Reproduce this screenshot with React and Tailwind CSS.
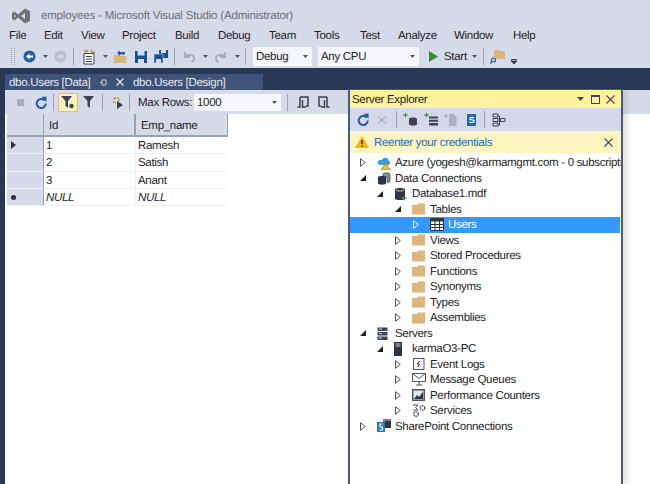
import React from 'react';

const font = '"Liberation Sans", Arial, sans-serif';

const menus = [
  ['File', 'w-[35px]'],
  ['Edit', 'w-[37px]'],
  ['View', 'w-[41px]'],
  ['Project', 'w-[53px]'],
  ['Build', 'w-[43px]'],
  ['Debug', 'w-[51px]'],
  ['Team', 'w-[45px]'],
  ['Tools', 'w-[46px]'],
  ['Test', 'w-[38px]'],
  ['Analyze', 'w-[56px]'],
  ['Window', 'w-[59px]'],
  ['Help', 'w-[40px]'],
];

function Svg({ w = 16, h = 16, className = '', children }) {
  return (
    <svg width={w} height={h} viewBox={`0 0 ${w} ${h}`} className={`shrink-0 ${className}`}>
      {children}
    </svg>
  );
}

const VsLogo = () => (
  <Svg w={20} h={16}>
    <path d="M14 0.5 L19 3 V13 L14 15.5 L7 9.5 L3.5 12.5 L1 11 V5 L3.5 3.5 L7 6.5 Z M14 5 L10 8 L14 11 Z M3.5 6.5 V9.5 L5 8 Z" fill="#6f7276" fillRule="evenodd" />
  </Svg>
);

const Caret = ({ className = '' }) => (
  <Svg w={5} h={3} className={className}>
    <path d="M0 0 H5 L2.5 3 Z" fill="#4b5563" />
  </Svg>
);

const Sep = ({ className = '' }) => <div className={`w-px h-[17px] bg-[#9aa1b2] shrink-0 ${className}`} />;

const BackIcon = ({ off }) => (
  <Svg w={13} h={13}>
    <circle cx="6.5" cy="6.5" r="6" fill={off ? '#b9bdc9' : '#1f5fa3'} />
    <path d="M3 6.5 L6.5 3.5 V5.5 H10 V7.5 H6.5 V9.5 Z" fill={off ? '#d6dbe9' : '#ffffff'} transform={off ? 'matrix(-1 0 0 1 13 0)' : undefined} />
  </Svg>
);

const NewProject = () => (
  <Svg w={14} h={16}>
    <path d="M2 4.5 H12 V15 H2 Z" fill="#fff" stroke="#3c4250" />
    <path d="M4 7.5 H10 M4 10 H10 M4 12.5 H10" stroke="#3c4250" />
    <path d="M2 1 L4 3 L6 1 M9 1 L10 3 L13 3.5" stroke="#c98a2b" strokeWidth="1.5" fill="none" />
  </Svg>
);

const OpenFile = () => (
  <Svg w={14} h={14}>
    <path d="M1 5 H5 L6 6 H13 V13 H1 Z" fill="#dcb67a" />
    <path d="M4 3 L7 0.5 V2 H12 V4.5 H7 V6 Z" fill="#1f5fa3" />
  </Svg>
);

const SaveIcon = () => (
  <Svg w={12} h={12}>
    <path d="M0 0 H12 V12 H0 Z" fill="#1c4f8c" />
    <path d="M2.5 0 H9.5 V4.5 H2.5 Z M3 8 H9 V12 H3 Z" fill="#d6dbe9" />
  </Svg>
);

const SaveAll = () => (
  <Svg w={14} h={13}>
    <path d="M5 0 H14 V8 H5 Z" fill="#1c4f8c" />
    <path d="M7 0 H12 V3 H7 Z" fill="#d6dbe9" />
    <path d="M0 4 H9 V13 H0 Z" fill="#1c4f8c" stroke="#d6dbe9" strokeWidth="0.6" />
    <path d="M2 9 H7 V13 H2 Z" fill="#d6dbe9" />
  </Svg>
);

const UndoIcon = ({ flip }) => (
  <Svg w={12} h={12} className={flip ? '-scale-x-100' : ''}>
    <path d="M2 1 V6 H7 M2.5 5.5 C5 2.5 11 3.5 11 7.5 C11 9 10 10.5 8.5 11" fill="none" stroke="#a6abb8" strokeWidth="1.8" />
  </Svg>
);

const Play = () => (
  <Svg w={9} h={11}>
    <path d="M0 0 L9 5.5 L0 11 Z" fill="#388a34" />
  </Svg>
);

const FindFolder = () => (
  <Svg w={15} h={15}>
    <path d="M4 1 H9 L10 2 H15 V10 H4 Z" fill="#dcb67a" />
    <circle cx="3.5" cy="11" r="2" fill="#d6dbe9" stroke="#1f5fa3" strokeWidth="1.2" />
    <path d="M2 12.5 L0.5 14.5" stroke="#1f5fa3" strokeWidth="1.3" />
  </Svg>
);

const Refresh = () => (
  <Svg w={12} h={13}>
    <path d="M9.5 4.5 A4.5 4.5 0 1 0 10.7 7.5" fill="none" stroke="#1c5da0" strokeWidth="2" />
    <path d="M6.5 1 L11.5 0.5 L11.5 6 Z" fill="#1c5da0" />
  </Svg>
);

const Funnel = ({ gear }) => (
  <Svg w={14} h={13}>
    <path d="M0 0 H11 L7 5 V12 L4.5 10 V5 Z" fill="#3c4250" />
    {gear && <circle cx="10.5" cy="10" r="2.7" fill="#3c4250" stroke="#fdf0c0" />}
  </Svg>
);

const RunQuery = () => (
  <Svg w={11} h={14}>
    <path d="M1 2 H6 V5 M1 2 V7 H3" fill="none" stroke="#c98a2b" strokeWidth="1.3" strokeDasharray="2 1" />
    <path d="M4 5 L10 9 L4 13 Z" fill="#3c4250" />
  </Svg>
);

const PaneIcon = ({ flip }) => (
  <Svg w={13} h={13} className={flip ? '-scale-x-100' : ''}>
    <path d="M3 1 H11 V10 H9 M3 1 V11 H0.5 M5.5 11 H9 M5.5 4 V12" fill="none" stroke="#3c4250" strokeWidth="1.5" />
  </Svg>
);

const AddDb = () => (
  <Svg w={15} h={13}>
    <path d="M0 2 H5 M2.5 0 V4" stroke="#388a34" strokeWidth="1.2" />
    <path d="M6 6 C6 4 14 4 14 6 V11 C14 13 6 13 6 11 Z" fill="#3c4250" />
  </Svg>
);

const AddServer = () => (
  <Svg w={15} h={13}>
    <path d="M0 2 H5 M2.5 0 V4" stroke="#388a34" strokeWidth="1.2" />
    <path d="M5 3.5 H14 V5.5 H5 Z M5 6.8 H14 V8.8 H5 Z M5 10 H14 V12.5 H5 Z" fill="#3c4250" />
  </Svg>
);

const AddDoc = () => (
  <Svg w={13} h={14}>
    <path d="M0 3 H4 M2 1 V5" stroke="#aab0be" strokeWidth="1.2" />
    <path d="M5 1 H10 L12.5 4 V13 H5 Z" fill="#aab0be" />
  </Svg>
);

const SpBadge = () => (
  <div className="w-[9px] h-[12px] bg-[#1c6bb0] text-white text-[9px] font-bold leading-[12px] text-center shrink-0">S</div>
);

const Diagram = () => (
  <Svg w={14} h={14}>
    <path d="M1 1 H6 V4 H1 Z M1 5.5 H6 V8.5 H1 Z M1 10 H6 V13 H1 Z M8.5 5.5 H13 V8.5 H8.5 Z" fill="none" stroke="#3c4250" />
    <path d="M6 3 H7.5 V12 H6 M7.5 7 H8.5" fill="none" stroke="#3c4250" />
  </Svg>
);

const Folder = () => (
  <Svg w={13} h={12}>
    <path d="M0 2 H5 L6 0.5 H13 V11.5 H0 Z" fill="#dcb67a" />
  </Svg>
);

const TableIcon = () => (
  <Svg w={14} h={13}>
    <path d="M0.5 0.5 H13.5 V12.5 H0.5 Z" fill="#ffffff" stroke="#30343f" />
    <path d="M0.5 0.5 H13.5 V3.5 H0.5 Z" fill="#30343f" />
    <path d="M5 3 V12 M9.5 3 V12 M1 6.5 H13 M1 9.5 H13" stroke="#30343f" />
  </Svg>
);

const AzureIcon = () => (
  <Svg w={14} h={14}>
    <path d="M1 8 C0 5 3 3 5 4 C6 1 11 1 12 5 C14 6 13 9 11 9 H3 Z" fill="#3aa0dc" />
    <path d="M8.5 7 L13.5 14 H4 Z" fill="#f2c12e" stroke="#7a5a10" strokeWidth="0.5" />
  </Svg>
);

const DataConn = () => (
  <Svg w={14} h={13}>
    <path d="M6 2 C6 0.5 13 0.5 13 2 V9 C13 10 11 10.5 10 10.5 V5 H6 Z" fill="#8a8f9b" stroke="#30343f" strokeWidth="0.7" />
    <path d="M1 5 C1 3.5 9 3.5 9 5 V11.5 C9 13 1 13 1 11.5 Z" fill="#30343f" />
  </Svg>
);

const DbFile = () => (
  <Svg w={13} h={14}>
    <path d="M1 2.5 C1 0.5 11 0.5 11 2.5 V11.5 C11 13.5 1 13.5 1 11.5 Z" fill="#30343f" />
    <path d="M2 3 C4 4.5 8 4.5 10 3" stroke="#c9ccd4" fill="none" />
    <path d="M8 11 H13 M10.5 9 L8 11 L10.5 13" stroke="#388a34" strokeWidth="1.2" fill="none" />
  </Svg>
);

const ServersIcon = () => (
  <Svg w={11} h={13}>
    <path d="M0.5 0.5 H10.5 V4 H0.5 Z M0.5 5 H10.5 V8.5 H0.5 Z M0.5 9.5 H10.5 V13 H0.5 Z" fill="#3c4250" />
    <path d="M2 2 H5 M2 6.5 H5 M2 11 H5" stroke="#d0d3da" />
  </Svg>
);

const PcIcon = () => (
  <Svg w={8} h={14}>
    <path d="M0 0 H8 V14 H0 Z" fill="#30343f" />
    <path d="M1.5 2 H6.5 M1.5 4 H6.5" stroke="#c9ccd4" />
  </Svg>
);

const LogIcon = () => (
  <Svg w={13} h={12}>
    <path d="M1.5 0.5 H12 V11.5 H1.5 Z" fill="#f4f4f6" stroke="#50555f" />
    <path d="M8 3 L5 6 H7.5 L6 9" fill="none" stroke="#30343f" />
  </Svg>
);

const MailIcon = () => (
  <Svg w={14} h={13}>
    <path d="M0.5 0.5 H13.5 V8.5 H0.5 Z M0.5 0.5 L7 5.5 L13.5 0.5" fill="#fff" stroke="#50555f" />
    <path d="M7 9 V12 M4 12 H10" stroke="#50555f" />
  </Svg>
);

const PerfIcon = () => (
  <Svg w={13} h={12}>
    <path d="M0 0 H13 V12 H0 Z" fill="#50555f" />
    <path d="M1.5 1.5 H11.5 V10.5 H1.5 Z" fill="#e8e9ec" />
    <path d="M2 10 L5 6 L7 8 L11 3 V10 Z" fill="#30343f" />
  </Svg>
);

const ServicesIcon = () => (
  <Svg w={14} h={13}>
    <circle cx="10.5" cy="4" r="2.3" fill="none" stroke="#50555f" strokeWidth="1.4" strokeDasharray="1.5 0.8" />
    <circle cx="4" cy="10" r="2.3" fill="none" stroke="#50555f" strokeWidth="1.4" strokeDasharray="1.5 0.8" />
    <path d="M1 1 H6 L3.5 3.5 L6 6 H1" fill="none" stroke="#50555f" />
  </Svg>
);

const SpIcon = () => (
  <Svg w={14} h={14}>
    <path d="M6 0 H14 V9 H6 Z" fill="#7b808b" />
    <path d="M8 2 H14 V9 H8 Z" fill="#30343f" />
    <path d="M0 3 H8 V13 H0 Z" fill="#1c78c0" />
    <path d="M5.5 5 H3 V8 H5.5 V11 H2.5" fill="none" stroke="#fff" strokeWidth="1.2" />
  </Svg>
);

const XIcon = ({ size = 9, color = '#4a4f5c' }) => (
  <Svg w={size} h={size}>
    <path d={`M0.5 0.5 L${size - 0.5} ${size - 0.5} M${size - 0.5} 0.5 L0.5 ${size - 0.5}`} stroke={color} strokeWidth="1.2" />
  </Svg>
);

const Arrow = ({ open, white }) =>
  open ? (
    <Svg w={6} h={6}>
      <path d="M6 0 V6 H0 Z" fill="#1e1e1e" />
    </Svg>
  ) : (
    <Svg w={6} h={9}>
      <path d="M0.5 0.7 L5.3 4.5 L0.5 8.3 Z" fill="none" stroke={white ? '#ffffff' : '#50555f'} />
    </Svg>
  );

const tree = [
  { label: 'Azure (yogesh@karmamgmt.com - 0 subscriptions)', level: 0, icon: <AzureIcon /> },
  { label: 'Data Connections', level: 0, open: true, icon: <DataConn /> },
  { label: 'Database1.mdf', level: 1, open: true, icon: <DbFile /> },
  { label: 'Tables', level: 2, open: true, icon: <Folder /> },
  { label: 'Users', level: 3, selected: true, icon: <TableIcon /> },
  { label: 'Views', level: 2, icon: <Folder /> },
  { label: 'Stored Procedures', level: 2, icon: <Folder /> },
  { label: 'Functions', level: 2, icon: <Folder /> },
  { label: 'Synonyms', level: 2, icon: <Folder /> },
  { label: 'Types', level: 2, icon: <Folder /> },
  { label: 'Assemblies', level: 2, icon: <Folder /> },
  { label: 'Servers', level: 0, open: true, icon: <ServersIcon /> },
  { label: 'karmaO3-PC', level: 1, open: true, icon: <PcIcon /> },
  { label: 'Event Logs', level: 2, icon: <LogIcon /> },
  { label: 'Message Queues', level: 2, icon: <MailIcon /> },
  { label: 'Performance Counters', level: 2, icon: <PerfIcon /> },
  { label: 'Services', level: 2, icon: <ServicesIcon /> },
  { label: 'SharePoint Connections', level: 0, icon: <SpIcon /> },
];

const indents = ['pl-[10px]', 'pl-[27px]', 'pl-[45px]', 'pl-[63px]'];

function TreeRow({ row }) {
  return (
    <div className={`flex items-center h-[15.5px] whitespace-nowrap ${indents[row.level]} ${row.selected ? 'bg-[#3399ff] text-white' : 'text-[#1e1e1e]'}`}>
      <div className="w-[17px] flex items-center shrink-0">
        <Arrow open={row.open} white={row.selected} />
      </div>
      <div className="w-[18px] flex items-center justify-start shrink-0">{row.icon}</div>
      <span className="mt-[2px]">{row.label}</span>
    </div>
  );
}

const gridRows = [
  ['1', 'Ramesh', 'arrow'],
  ['2', 'Satish', ''],
  ['3', 'Anant', ''],
  ['NULL', 'NULL', 'star'],
];

function ServerExplorer() {
  return (
    <div className="absolute left-[348px] top-[89px] w-[275px] h-[395px] bg-white border-x-2 border-t border-[#4a5a78] flex flex-col shadow-[4px_0_6px_rgba(0,0,0,0.12)] overflow-hidden text-[11.5px]">
      <div className="h-[18px] bg-[#fff29d] flex items-center pl-[2px] pr-[6px] shrink-0 text-[#1e1e1e]">
        <span className="mt-[3px]">Server Explorer</span>
        <Svg w={7} h={4} className="ml-auto">
          <path d="M0 0 H7 L3.5 4 Z" fill="#3c4250" />
        </Svg>
        <Svg w={9} h={9} className="ml-[7px]">
          <path d="M0.5 1.5 H8.5 V8.5 H0.5 Z" fill="none" stroke="#3c4250" />
          <path d="M0 1 H9" stroke="#3c4250" strokeWidth="2" />
        </Svg>
        <div className="ml-[6px]">
          <XIcon />
        </div>
      </div>
      <div className="h-[23px] bg-[#d3d9e8] flex items-center pl-[7px] shrink-0">
        <Refresh />
        <div className="ml-[9px]">
          <XIcon size={8} color="#aab0be" />
        </div>
        <Sep className="ml-[10px]" />
        <div className="ml-[6px]"><AddDb /></div>
        <div className="ml-[6px]"><AddServer /></div>
        <div className="ml-[5px]"><AddDoc /></div>
        <div className="ml-[10px]"><SpBadge /></div>
        <Sep className="ml-[8px]" />
        <div className="ml-[7px]"><Diagram /></div>
      </div>
      <div className="h-[22px] bg-[#fdf4bf] flex items-center pl-[5px] pr-[8px] shrink-0">
        <Svg w={14} h={12}>
          <path d="M7 0 L14 12 H0 Z" fill="#f2b705" />
          <path d="M7 4 V8 M7 9.3 V10.8" stroke="#1e1e1e" strokeWidth="1.3" />
        </Svg>
        <span className="ml-[5px] mt-[3px] text-[#1c6bb8]">Reenter your credentials</span>
        <div className="ml-auto">
          <XIcon />
        </div>
      </div>
      <div className="pt-[2px] pr-[1px]">
        {tree.map((row) => (
          <TreeRow key={row.label} row={row} />
        ))}
      </div>
    </div>
  );
}

export default function App() {
  return (
    <div className="relative w-[650px] h-[484px] overflow-hidden bg-white text-[11.5px] tracking-[-0.3px] text-[#1e1e1e] [text-rendering:geometricPrecision]" style={{ fontFamily: font }}>
      <div className="bg-[#d6dbe9]">
        <div className="h-[27px] flex items-center pl-[11px] pt-[4px]">
          <VsLogo />
          <span className="ml-[10px] mt-[2px] tracking-[-0.18px] text-[#6d7078] whitespace-nowrap">employees - Microsoft Visual Studio (Administrator)</span>
        </div>
        <div className="h-[18px] flex items-center pl-[9px] pt-[2px]">
          {menus.map(([name, width]) => (
            <span key={name} className={width}>{name}</span>
          ))}
        </div>
        <div className="h-[23px] flex items-center pl-[11px]">
          <div className="w-[4px] h-[17px] shrink-0 border-x border-dotted border-[#9aa1b2]" />
          <div className="ml-[8px]"><BackIcon /></div>
          <Caret className="ml-[7px]" />
          <div className="ml-[6px]"><BackIcon off /></div>
          <Sep className="ml-[6px]" />
          <div className="ml-[8px]"><NewProject /></div>
          <Caret className="ml-[7px]" />
          <div className="ml-[5px]"><OpenFile /></div>
          <div className="ml-[8px]"><SaveIcon /></div>
          <div className="ml-[7px]"><SaveAll /></div>
          <Sep className="ml-[6px]" />
          <div className="ml-[8px]"><UndoIcon /></div>
          <Caret className="ml-[8px]" />
          <div className="ml-[7px]"><UndoIcon flip /></div>
          <Caret className="ml-[8px]" />
          <Sep className="ml-[5px]" />
          <div className="ml-[7px] w-[59px] h-[19px] bg-[#f5f6fa] flex items-center pl-[3px] shrink-0">
            <span className="mt-[2px]">Debug</span>
            <Caret className="ml-auto mr-[4px]" />
          </div>
          <div className="ml-[6px] w-[101px] h-[19px] bg-[#f5f6fa] flex items-center pl-[3px] shrink-0">
            <span className="mt-[2px]">Any CPU</span>
            <Caret className="ml-auto mr-[4px]" />
          </div>
          <div className="ml-[10px]"><Play /></div>
          <span className="ml-[6px] mt-[2px] w-[22px] whitespace-nowrap">Start</span>
          <Caret className="ml-[6px]" />
          <Sep className="ml-[6px]" />
          <div className="ml-[6px]"><FindFolder /></div>
          <Svg w={6} h={5} className="ml-[6px] mt-[10px]">
            <path d="M0 0.5 H6 M0 2 H6 L3 5 L0 2" stroke="#3c4250" fill="#3c4250" />
          </Svg>
        </div>
      </div>

      <div className="h-[22px] bg-[#293955] flex items-end pl-[5px]">
        <div className="h-[16px] w-[123px] bg-[#3e5377] text-[#e4e9f2] flex items-center pl-[4px]">
          <span className="mt-[3px] whitespace-nowrap">dbo.Users [Data]</span>
          <Svg w={7} h={7} className="ml-auto">
            <path d="M0 3.5 H2 M2 1 H6 V6 H2 Z" fill="none" stroke="#c9d0de" />
          </Svg>
          <div className="ml-[9px] mr-[4px]"><XIcon size={8} color="#dfe4ee" /></div>
        </div>
        <div className="h-[16px] w-[135px] bg-[#3e5377] text-[#e4e9f2] flex items-center pl-[5px]">
          <span className="mt-[3px] whitespace-nowrap">dbo.Users [Design]</span>
        </div>
      </div>

      <div className="flex h-[394px]">
        <div className="w-[5px] bg-[#293955] shrink-0" />
        <div className="flex-1 flex flex-col">
          <div className="h-[24px] bg-[#d6dbe9] flex items-center pl-[12px] pt-[1px]">
            <div className="w-[7px] h-[7px] bg-[#a6abb8] shrink-0" />
            <div className="ml-[11px]"><Refresh /></div>
            <Sep className="ml-[6px]" />
            <div className="ml-[4px] w-[20px] h-[19px] bg-[#fdf0c0] border border-[#e5c365] flex items-center justify-center shrink-0"><Funnel gear /></div>
            <div className="ml-[5px]"><Funnel /></div>
            <Sep className="ml-[5px]" />
            <div className="ml-[10px]"><RunQuery /></div>
            <Sep className="ml-[5px]" />
            <span className="ml-[8px] mt-[2px] w-[50px] shrink-0 whitespace-nowrap">Max Rows:</span>
            <div className="ml-[6px] w-[87px] h-[17px] bg-[#f5f6fa] flex items-center pl-[3px] shrink-0">
              <span className="mt-[2px]">1000</span>
              <Caret className="ml-auto mr-[4px]" />
            </div>
            <Sep className="ml-[6px]" />
            <div className="ml-[9px]"><PaneIcon /></div>
            <div className="ml-[7px]"><PaneIcon flip /></div>
          </div>
          <div className="pl-[2px] w-[223px]">
            <div className="grid grid-cols-[37px_92px_92px] grid-rows-[23px_17.3px_17.3px_17.3px_17.3px]">
              <div className="bg-[#d6dbe9] border-r border-b-2 border-[#9aa1b2]" />
              <div className="bg-[#d6dbe9] border-r-2 border-b-2 border-[#9aa1b2] flex items-center pl-[5px] pt-[4px]">Id</div>
              <div className="bg-[#d6dbe9] border-b-2 border-r border-[#9aa1b2] flex items-center pl-[5px] pt-[4px]">Emp_name</div>
              {gridRows.map(([id, name, mark]) => {
                const isNull = mark === 'star';
                return (
                  <React.Fragment key={id}>
                    <div className="bg-[#d6dbe9] border-r border-b border-[#9aa1b2] border-b-[#f0f2f7] flex items-center justify-center pr-[23px]">
                      {mark === 'arrow' && (
                        <Svg w={5} h={8}>
                          <path d="M0 0 L5 4 L0 8 Z" fill="#30343f" />
                        </Svg>
                      )}
                      {mark === 'star' && <div className="w-[5px] h-[5px] bg-[#30343f] rounded-full" />}
                    </div>
                    <div className={`border-r border-b border-[#eef0f5] flex items-center pl-[2px] pt-[3px] ${isNull ? 'italic' : ''}`}>{id}</div>
                    <div className={`border-b border-[#eef0f5] flex items-center pl-[2px] pt-[3px] ${isNull ? 'italic' : ''}`}>{name}</div>
                  </React.Fragment>
                );
              })}
            </div>
          </div>
        </div>
      </div>

      <ServerExplorer />
    </div>
  );
}
